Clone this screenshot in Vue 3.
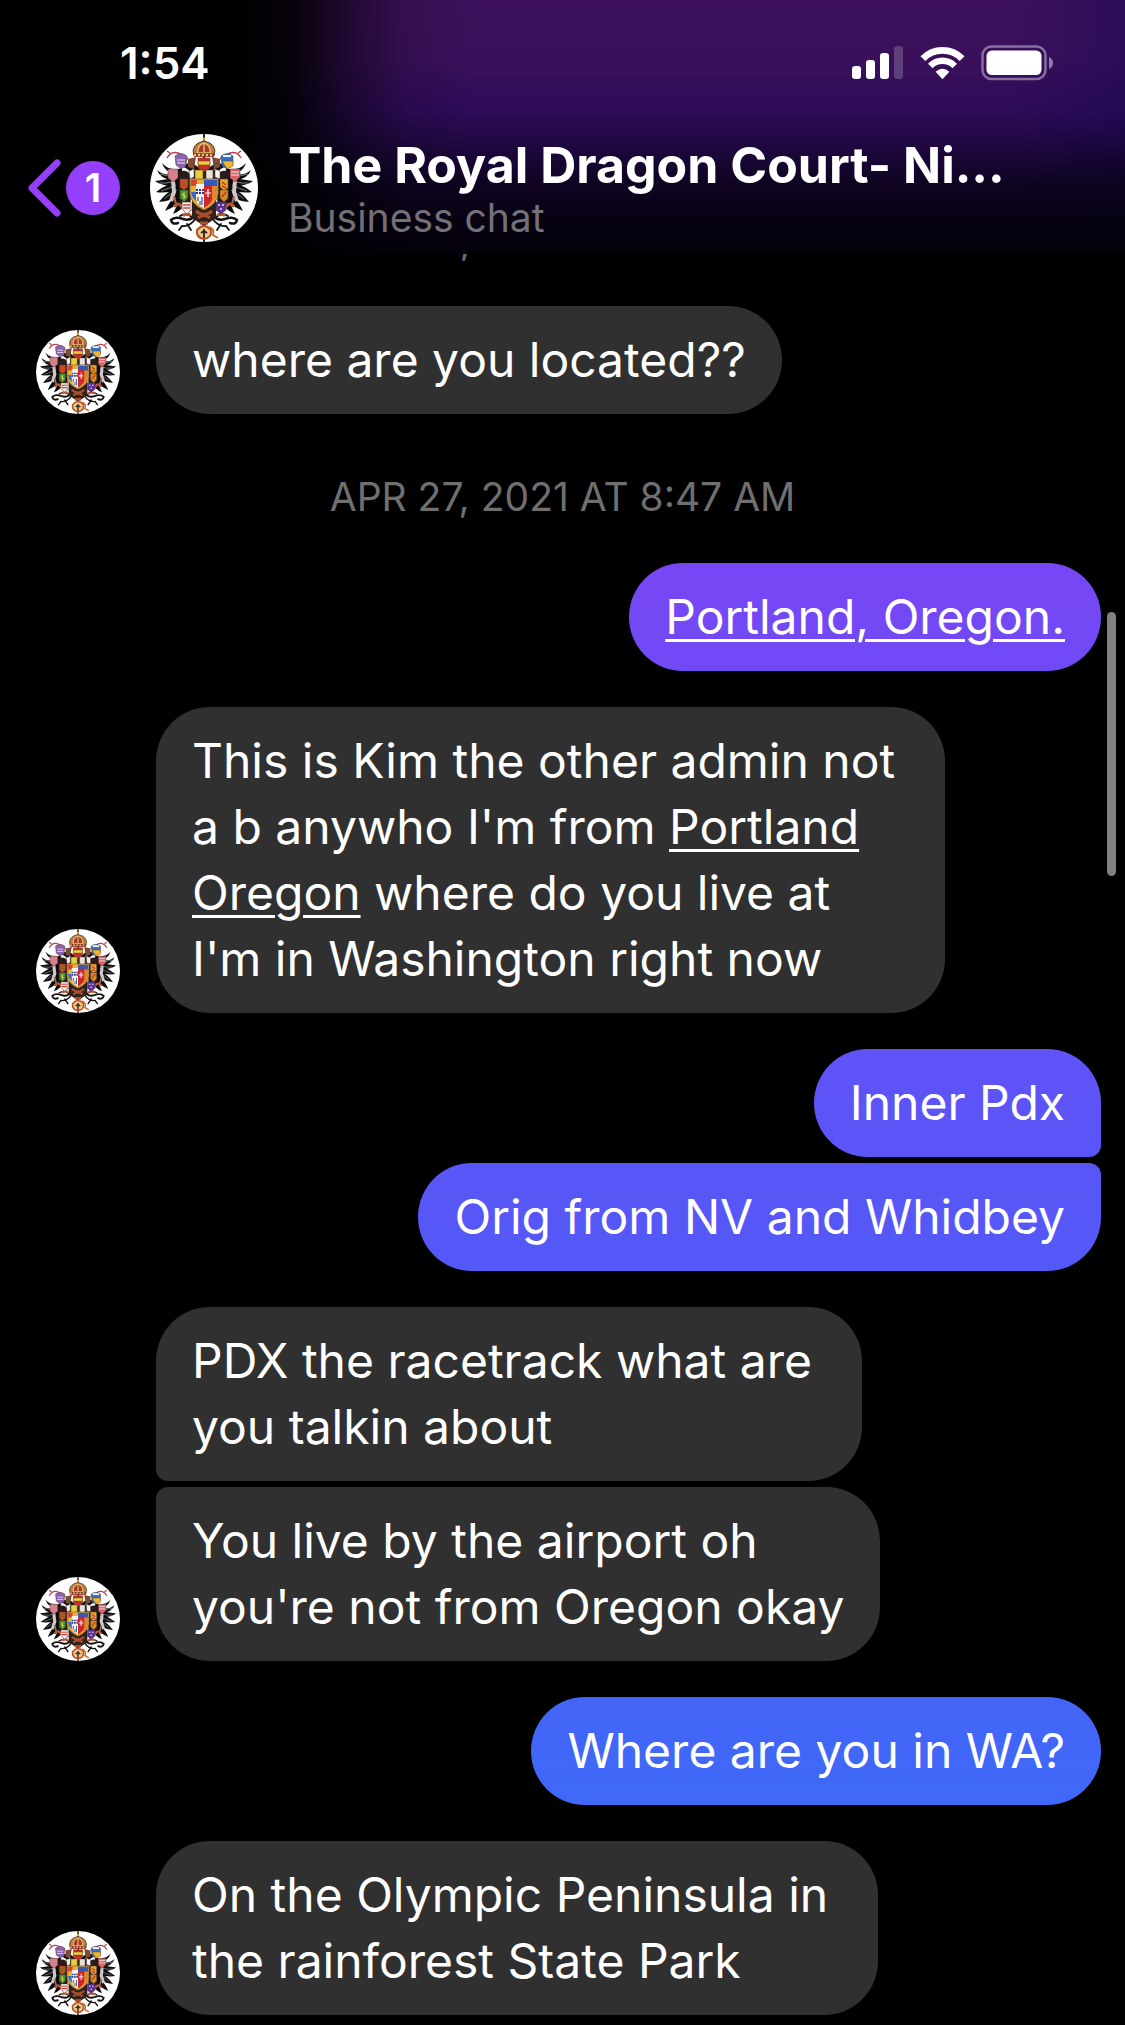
<template>
  <div class="chat">
    <header class="chat-header">
      <div class="status-bar">
        <span class="clock">1:54</span>
        <div class="status-icons">
          <svg width="52" height="34" viewBox="0 0 52 34" fill="#fff">
            <rect x="0" y="20" width="9" height="13" rx="3" />
            <rect x="14" y="14" width="9" height="19" rx="3" />
            <rect x="28" y="7" width="9" height="26" rx="3" />
            <rect x="42" y="0" width="9" height="33" rx="3" opacity="0.2" />
          </svg>
          <svg width="45" height="34" viewBox="0 0 46 34" fill="none" stroke="#fff">
            <path d="M3 12.5 A28 28 0 0 1 43 12.5" stroke-width="7" />
            <path d="M10.500 20 A17.500 17.500 0 0 1 35.500 20" stroke-width="6.500" />
            <path d="M16 26 Q23 19.500 30 26 L23 33.500Z" fill="#fff" stroke="none" />
          </svg>
          <svg width="72" height="36" viewBox="0 0 72 36">
            <rect x="1.500" y="1.500" width="63" height="32.500" rx="9" fill="none" stroke="#fff" stroke-opacity="0.4" stroke-width="2.500" />
            <rect x="5.500" y="5.500" width="55" height="24.500" rx="5.500" fill="#fff" />
            <path d="M68 12 Q72 13.500 72 18 Q72 22.500 68 24Z" fill="#fff" opacity="0.45" />
          </svg>
        </div>
      </div>
      <div class="title-bar">
        <button class="back" type="button" aria-label="Back">
          <svg width="34" height="58" viewBox="0 0 34 58" fill="none" stroke="#9440fa" stroke-width="7" stroke-linecap="round" stroke-linejoin="round">
            <path d="M30 4 L5 29 L30 54" />
          </svg>
          <span class="unread">1</span>
        </button>
        <svg class="avatar avatar-large" viewBox="0 0 108 108"><use href="#crest" /></svg>
        <div class="title-text">
          <h1>{{ title }}</h1>
          <p>Business chat</p>
        </div>
      </div>
    </header>

    <main class="thread">
      <template v-for="(group, i) in groups" :key="i">
        <time v-if="group.time" class="timestamp">{{ group.time }}</time>
        <section v-else class="group" :class="group.from">
          <svg v-if="group.from === 'them'" class="avatar" viewBox="0 0 108 108"><use href="#crest" /></svg>
          <div class="bubbles">
            <p v-for="(message, j) in group.messages" :key="j" class="bubble" :class="message.tone">
              <template v-for="(part, k) in message.parts" :key="k">
                <a v-if="part.place" href="#">{{ part.place }}</a>
                <template v-else>{{ part.text }}</template>
              </template>
            </p>
          </div>
        </section>
      </template>
    </main>
    <div class="scroll-thumb"></div>

    <svg class="defs" width="0" height="0" aria-hidden="true">
      <defs>
        <clipPath id="disc"><circle cx="54" cy="54" r="54" /></clipPath>
        <!-- one wing side, mirrored for the other -->
        <g id="wing">
          <g fill="#0c0c0e">
            <path d="M32 34 Q20 38 12 29 Q16 41 32 41Z" />
            <path d="M30 38 Q16 44 7 36 Q12 49 31 45Z" />
            <path d="M30 42 Q16 46 5 47 Q14 54 31 50Z" />
            <path d="M29 47 Q16 50 6 58 Q16 60 31 55Z" />
            <path d="M30 52 Q17 57 9 68 Q21 67 32 60Z" />
            <path d="M31 57 Q21 64 15 77 Q27 72 34 64Z" />
            <path d="M33 62 Q27 70 23 80 Q31 77 36 69Z" />
          </g>
          <g fill="none" stroke="#9a9a9f" stroke-width="0.800">
            <path d="M10 40 Q17 43 25 41 M9 49 Q17 50 25 47 M11 57 Q18 55 26 51 M14 65 Q20 60 27 56" />
          </g>
          <g fill="none" stroke="#141214" stroke-linecap="round">
            <path d="M48 78 Q42 88 33 85 Q25 82 21 86 Q22 91 28 89" stroke-width="2.500" />
            <path d="M46 84 Q40 93 32 92 L29 96 M42 83 Q36 78 30 82 M37 90 L41 96" stroke-width="1.800" />
            <path d="M51 40 Q44 29 36 32 Q42 35 45 42" stroke-width="4" />
          </g>
          <path d="M29 38 Q36 34 42 42 L40 78 Q32 76 29 66Z" fill="#2a1c1b" />
          <path d="M17 24 Q21 17 28 19 L38 25 M20 19 L17 17" fill="none" stroke="#b9404c" stroke-width="1.500" />
          <path d="M23 47 L24 58 L21 67" stroke="#cfc8c6" stroke-width="4" fill="none" />
          <path d="M24 62 L26 70" stroke="#a8625a" stroke-width="2" fill="none" />
          <path d="M24 73 q4 -6 8 0 t9 2 M33 82 q4 -4 8 0" stroke="#b65a35" stroke-width="3" fill="none" />
        </g>
        <g id="crest" clip-path="url(#disc)">
          <rect width="108" height="108" fill="#fff" />
          <path d="M54 0V108" stroke="#2b2520" stroke-width="2" />
          <use href="#wing" />
          <use href="#wing" transform="translate(108 0) scale(-1 1)" />
          <path d="M42 36 H66 V84 L54 92 L42 84Z" fill="#30211d" />
          <!-- crown -->
          <path d="M44 22 Q40 10 54 7 Q68 10 64 22Z" fill="#b9803f" stroke="#5f3421" stroke-width="1" />
          <path d="M48 19 Q47 11 54 9 Q61 11 60 19Z" fill="#a93a2b" stroke="#e1bd6c" stroke-width="1.500" />
          <path d="M54 9V19" stroke="#e1bd6c" stroke-width="1.500" />
          <path d="M44 21H64" stroke="#8b3a22" stroke-width="3.500" />
          <path d="M44 21H64" stroke="#e9c878" stroke-width="2" stroke-dasharray="2 2" />
          <circle cx="54" cy="5" r="1.500" fill="#d8a441" />
          <!-- helmets and small shields -->
          <path d="M38 25L46 23L44 35L38 33Z M70 25L62 23L64 35L70 33Z" fill="#7d4a33" />
          <g stroke="#49372b" stroke-width="0.500">
            <path d="M48 24H60V34L54 38L48 34Z" fill="#c42f27" />
            <path d="M48 27H60V31H48Z" fill="#f2cc36" />
            <path d="M25 22Q31 17 37 22L36 32L31 35L26 31Z" fill="#8a62b0" />
            <path d="M71 22Q77 17 83 22V30L77 35L72 32Z" fill="#3272c4" />
            <path d="M72 27H83V32L77 35Z" fill="#f2b52b" />
            <path d="M18 35H28V44L23 48L18 44Z" fill="#d8818a" />
            <path d="M80 35H90V43L85 48L80 44Z" fill="#dc6468" />
            <path d="M45 36H53V45L49 48L45 45Z" fill="#e6cf37" />
            <path d="M56 36H63V44L60 48L56 44Z" fill="#e9e2dc" />
            <path d="M39 37L44 35V43L40 45Z M65 35L70 37V45L65 43Z" fill="#f8f5f0" />
            <path d="M30 45H38V53L34 56L30 53Z" fill="#dc4426" />
            <path d="M30 56H38V64L34 68L30 64Z" fill="#3e9736" />
            <path d="M70 45H78V54L74 57L70 53Z" fill="#e8a626" />
            <path d="M70 56H78V64L74 68L70 64Z" fill="#d88a23" />
            <path d="M32 68H41V76L37 80L32 75Z" fill="#f1ece8" />
            <path d="M66 68H76V76L71 80L66 76Z" fill="#5b3297" />
          </g>
          <path d="M27 26H35M27 29H35 M81 38H89M81 41H89" stroke="#f1e4ee" stroke-width="1" />
          <path d="M33 71H40M33 74H40" stroke="#d3423f" stroke-width="1.500" />
          <path d="M73 22H81" stroke="#f4f4f4" stroke-width="2" />
          <path d="M31 48H37M31 51H37" stroke="#7a6a1e" stroke-width="1.200" />
          <path d="M34 58V65 M32 60L36 63" stroke="#e5c94a" stroke-width="1.200" />
          <path d="M72 48L76 51M72 52L76 54 M76 58L72 63" stroke="#b33b22" stroke-width="1.500" />
          <circle cx="69" cy="71" r="1" fill="#e9d9ef" /><circle cx="73" cy="71" r="1" fill="#e9d9ef" /><circle cx="71" cy="75" r="1" fill="#e9d9ef" />
          <!-- centre shield -->
          <path d="M40 45H68V60Q67 70 54 76Q41 70 40 60Z" fill="#ebb22f" stroke="#8c6a4c" />
          <path d="M41 46H47V52H41Z" fill="#d9432e" />
          <path d="M54 46H67V58L54 52Z" fill="#3757bb" />
          <path d="M61 52H67V60Q66 66 60 71Z" fill="#e2862c" />
          <path d="M41 58H46V67Q42 64 41 58Z" fill="#3d67c6" />
          <path d="M46 50H54V74Q46 71 46 62Z" fill="#f2f1f4" />
          <path d="M46 56H54M46 59H54" stroke="#2a3e86" stroke-width="2" stroke-dasharray="2 1" />
          <path d="M48 63V67M52 63V71M50 67V71" stroke="#2e539c" stroke-width="1.200" />
          <path d="M54 51H62V65Q61 70 54 74Z" fill="#c9282c" />
          <path d="M58 55V63M55 59H61" stroke="#fff" stroke-width="1.200" />
          <!-- collar and pendant -->
          <path d="M46 77Q54 84 62 77M48 84Q54 79 60 84M50 89H58" fill="none" stroke="#a94d2a" stroke-width="3" />
          <path d="M47 96Q54 88 61 96Q62 104 54 105Q46 104 47 96Z" fill="#f0c98b" stroke="#b3532b" stroke-width="2" />
          <path d="M59 93Q65 95 63 101L68 104" fill="none" stroke="#cf6b2c" stroke-width="2" />
          <path d="M54 95V104M51 99Q54 96 57 99" stroke="#30251f" stroke-width="1.800" fill="none" />
        </g>
      </defs>
    </svg>
  </div>
</template>

<script setup>
import { ref } from 'vue'

const title = ref('The Royal Dragon Court- Ni...')

const groups = ref([
  { time: 'APR 27, 2021 AT 7:36 AM' },
  { from: 'them', messages: [{ parts: [{ text: 'where are you located??' }] }] },
  { time: 'APR 27, 2021 AT 8:47 AM' },
  { from: 'me', messages: [{ tone: 'violet', parts: [{ place: 'Portland, Oregon.' }] }] },
  {
    from: 'them',
    messages: [
      {
        tone: 'roomy',
        parts: [
          { text: "This is Kim the other admin not\na b anywho I'm from " },
          { place: 'Portland\nOregon' },
          { text: " where do you live at\nI'm in Washington right now" }
        ]
      }
    ]
  },
  {
    from: 'me',
    messages: [
      { tone: 'indigo', parts: [{ text: 'Inner Pdx' }] },
      { tone: 'iris', parts: [{ text: 'Orig from NV and Whidbey' }] }
    ]
  },
  {
    from: 'them',
    messages: [
      { tone: 'roomy', parts: [{ text: 'PDX the racetrack what are\nyou talkin about' }] },
      { parts: [{ text: "You live by the airport oh\nyou're not from Oregon okay" }] }
    ]
  },
  { from: 'me', messages: [{ tone: 'blue', parts: [{ text: 'Where are you in WA?' }] }] },
  {
    from: 'them',
    messages: [{ tone: 'roomy', parts: [{ text: 'On the Olympic Peninsula in\nthe rainforest State Park' }] }]
  }
])
</script>

<style>
body {
  margin: 0;
  background: #000;
}
</style>

<style scoped>
.chat {
  position: relative;
  min-height: 100vh;
  overflow: hidden;
  background: #000;
  color: #fff;
  font-family: Inter, "Liberation Sans", sans-serif;
}

.defs {
  position: absolute;
}

.chat-header {
  position: relative;
  z-index: 1;
  box-sizing: border-box;
  height: 254px;
  background:
    linear-gradient(90deg, #000 0%, #000 21%, rgba(0, 0, 0, 0.88) 26%, rgba(0, 0, 0, 0.45) 31%, rgba(0, 0, 0, 0.12) 36%, transparent 42%),
    linear-gradient(180deg, transparent 44%, rgba(4, 1, 11, 0.28) 56%, rgba(4, 1, 11, 0.7) 72%, rgba(4, 1, 11, 0.92) 88%, #04010b 100%),
    linear-gradient(270deg, rgba(20, 6, 84, 0.4) 0%, transparent 10%),
    linear-gradient(180deg, #3c115a 0%, #3a105b 24%, #2d0b58 44%, #260a55 100%);
}

.status-bar {
  display: flex;
  align-items: center;
  justify-content: space-between;
  height: 126px;
  padding: 0 72px 0 120px;
}

.clock {
  font-size: 44px;
  font-weight: 600;
}

.status-icons {
  display: flex;
  align-items: center;
  gap: 16px;
}

.title-bar {
  display: flex;
  align-items: center;
  padding: 8px 24px 0 27px;
}

.back {
  display: flex;
  align-items: center;
  gap: 5px;
  padding: 0;
  border: 0;
  background: none;
  color: #fff;
  font-family: inherit;
}

.unread {
  width: 54px;
  height: 54px;
  border-radius: 50%;
  background: #9440fa;
  font-size: 39px;
  font-weight: 600;
  line-height: 54px;
  text-align: center;
}

.avatar {
  flex-shrink: 0;
  width: 84px;
  height: 84px;
}

.avatar-large {
  width: 108px;
  height: 108px;
  margin: 0 30px;
}

.title-text {
  min-width: 0;
}

.title-text h1 {
  margin: 0;
  overflow: hidden;
  font-size: 50px;
  font-weight: 700;
  line-height: 60px;
  white-space: nowrap;
}

.title-text p {
  margin: 0;
  color: #737078;
  font-size: 39px;
  line-height: 46px;
}

/* the thread is scrolled so its first date sits under the header */
.thread {
  display: flex;
  flex-direction: column;
  gap: 36px;
  margin-top: -97px;
  padding: 0 24px 10px 36px;
}

.timestamp {
  margin: 0 0 -36px -12px;
  padding-top: 16px;
  color: #6f6f6f;
  font-size: 39px;
  line-height: 133px;
  text-align: center;
}

.group + .timestamp {
  margin-top: -36px;
}

.group {
  display: flex;
  align-items: flex-end;
  gap: 36px;
}

.group.me {
  justify-content: flex-end;
}

.bubbles {
  display: flex;
  flex-direction: column;
  align-items: flex-start;
  gap: 6px;
}

.me .bubbles {
  align-items: flex-end;
}

.bubble {
  margin: 0;
  padding: 21px 36px;
  border-radius: 54px;
  background: #303030;
  font-size: 48px;
  line-height: 66px;
  white-space: pre-line;
}

.bubble.roomy {
  padding-right: 50px;
}

.bubble a {
  color: inherit;
  text-decoration-thickness: 3px;
  text-underline-offset: 5px;
}

.them .bubble:not(:last-child) {
  border-bottom-left-radius: 12px;
}

.them .bubble:not(:first-child) {
  border-top-left-radius: 12px;
}

.me .bubble:not(:last-child) {
  border-bottom-right-radius: 12px;
}

.me .bubble:not(:first-child) {
  border-top-right-radius: 12px;
}

.violet {
  background: linear-gradient(#7847f5, #7049f5);
}

.indigo {
  background: linear-gradient(#5f53f6, #5a55f6);
}

.iris {
  background: linear-gradient(#5956f6, #5359f6);
}

.blue {
  background: linear-gradient(#4365f7, #3f69f8);
}

.scroll-thumb {
  position: absolute;
  top: 612px;
  right: 9px;
  width: 9px;
  height: 264px;
  border-radius: 5px;
  background: #808080;
}
</style>
